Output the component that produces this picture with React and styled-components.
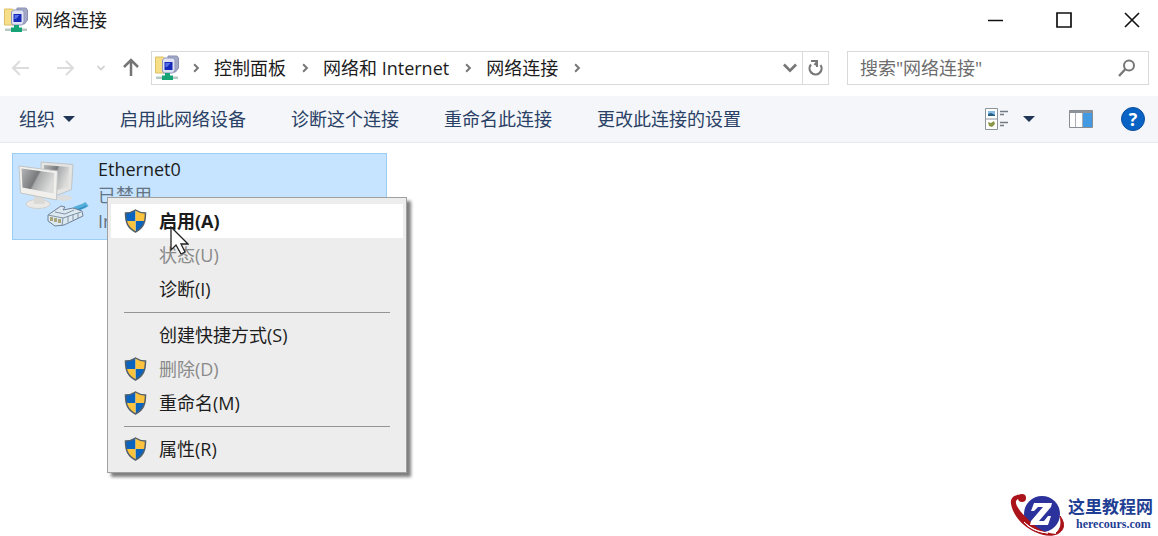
import React from "react";
import styled, { createGlobalStyle } from "styled-components";

const GlobalStyle = createGlobalStyle`
  * { box-sizing: border-box; }
  body {
    margin: 0;
    background: #fff;
    color: #1c1c1c;
    font: 18px/26px "Open Sans", "Noto Sans CJK SC", sans-serif;
  }
  button, input { font: inherit; color: inherit; }
`;

const Window = styled.div`
  position: relative;
  display: flex;
  flex-direction: column;
  min-height: 100vh;
  overflow: hidden;
`;

const IconButton = styled.button`
  display: flex;
  align-items: center;
  justify-content: center;
  flex: none;
  width: ${(p) => p.$width || 24}px;
  height: 32px;
  padding: 0;
  border: 0;
  background: none;
`;

const TitleBar = styled.header`
  display: flex;
  align-items: center;
  gap: 7px;
  height: 39px;
  padding-left: 4px;
`;

const Title = styled.h1`
  flex: 1;
  margin: 0;
  font-size: 18px;
  font-weight: 400;
`;

const WindowControls = styled.div`
  display: flex;
  gap: 16px;
`;

const NavRow = styled.div`
  display: flex;
  align-items: center;
  height: 57px;
  padding: 0 9px;
`;

const NavButtons = styled.nav`
  display: flex;
  align-items: center;
  width: 142px;
`;

const AddressBar = styled.div`
  display: flex;
  align-items: center;
  flex: 1;
  height: 34px;
  padding-left: 3px;
  border: 1px solid #d9d9d9;
`;

const Crumbs = styled.div`
  display: flex;
  align-items: center;
  flex: 1;
`;

const Crumb = styled.button`
  padding: 0 2px;
  border: 0;
  background: none;
  line-height: 24px;
  white-space: nowrap;
`;

const CrumbArrow = styled.span`
  display: flex;
  justify-content: center;
  width: 33px;
`;

const Refresh = styled(IconButton)`
  border-left: 1px solid #d9d9d9;
`;

const SearchBox = styled.label`
  display: flex;
  align-items: center;
  flex: none;
  width: 26.5%;
  height: 34px;
  margin-left: 18px;
  padding: 0 12px;
  border: 1px solid #d9d9d9;
`;

const SearchInput = styled.input`
  flex: 1;
  min-width: 0;
  padding: 0;
  border: 0;
  outline: 0;
  background: none;
  &::placeholder { color: #6d6d6d; opacity: 1; }
`;

const CommandBar = styled.div`
  display: flex;
  align-items: center;
  height: 47px;
  padding: 0 13px 0 19px;
  border-bottom: 1px solid #e6eaee;
  background: #f4f6f9;
  color: #2a4166;
`;

const Commands = styled.div`
  display: flex;
  flex: 1;
  gap: 45px;
`;

const Command = styled.button`
  display: flex;
  align-items: center;
  gap: 8px;
  padding: 0;
  border: 0;
  background: none;
  white-space: nowrap;
`;

const ViewTools = styled.div`
  display: flex;
  align-items: center;
  gap: 28px;
`;

const ViewPicker = styled.div`
  display: flex;
  gap: 8px;
`;

const HelpButton = styled.button`
  width: 24px;
  height: 24px;
  padding: 0;
  border: 1px solid #0b4f9f;
  border-radius: 50%;
  background: #0863c4;
  color: #fff;
  font-weight: 700;
  line-height: 22px;
`;

const Content = styled.main`
  flex: 1;
  padding: 10px 12px;
`;

const Connection = styled.section`
  position: relative;
  display: flex;
  gap: 7px;
  width: 375px;
  height: 87px;
  padding: 2px 4px;
  border: 1px solid #9bcdf5;
  background: #c6e4ff;
`;

const Details = styled.div`
  display: flex;
  flex-direction: column;
  line-height: 26px;
`;

const Muted = styled.span`
  color: #657483;
`;

const Menu = styled.div`
  position: absolute;
  z-index: 1;
  top: 43px;
  left: 94px;
  width: 300px;
  padding: 6px 3px;
  border: 1px solid #a0a0a0;
  background: #ededed;
  box-shadow: 4px 4px 3px rgba(0, 0, 0, 0.5);
`;

const MenuItem = styled.button`
  display: flex;
  align-items: center;
  width: 100%;
  height: 34px;
  padding: 0 0 0 13px;
  border: 0;
  background: ${(p) => (p.$active ? "#fff" : "none")};
  color: ${(p) => (p.disabled ? "#8a8a8a" : "#1c1c1c")};
  font-weight: ${(p) => (p.$active ? 700 : 400)};
  text-align: left;
`;

const MenuIcon = styled.span`
  display: flex;
  flex: none;
  width: 35px;
`;

const Separator = styled.hr`
  height: 1px;
  margin: 6px 13px 5px;
  border: 0;
  background: #949494;
`;

const Pointer = styled.svg`
  position: absolute;
  z-index: 2;
  top: 72px;
  left: 157px;
  pointer-events: none;
`;

const Watermark = styled.div`
  position: absolute;
  right: 5px;
  bottom: 0;
  display: flex;
  align-items: center;
  color: #1f3f94;
`;

const SiteName = styled.div`
  display: flex;
  flex-direction: column;
  font-size: 17px;
  font-weight: 700;
  line-height: 20px;
`;

const SiteUrl = styled.span`
  padding-left: 8px;
  font: 700 12px/14px "Liberation Serif", serif;
`;

const NetworkIcon = () => (
  <svg width="24" height="26" viewBox="0 0 24 26" aria-hidden="true">
    <path d="M.5 2h8l2 2v14H.5z" fill="#f6df86" stroke="#dcc06a" />
    <path d="M13 1h9l1.500 2v10l-3 4h-8z" fill="#a3a8c4" stroke="#8b91b4" />
    <path d="M7.500 5l2-2h9l1.500 2v10l-2 3h-9.500l-1-2z" fill="#dfe2f3" stroke="#8f95bd" />
    <path d="M9.500 7h8v8h-8z" fill="#1529b8" />
    <path d="M10.500 8h5l-3.500 4h-1.500z" fill="#5570e6" />
    <path d="M1 21.500h22v2.500H1z" fill="#b5c9c2" />
    <path d="M10 18h5v2.500h3V25H7v-4.500h3z" fill="#16a477" />
  </svg>
);

const Arrow = ({ color, turn = 0 }) => (
  <svg width="20" height="20" viewBox="0 0 20 20" fill="none" stroke={color} strokeWidth={turn === 90 ? 2.5 : 2} aria-hidden="true">
    <path transform={`rotate(${turn} 10 10)`} d="M18 10H2M9 3l-7 7 7 7" />
  </svg>
);

const Chevron = ({ down, color = "#777", size = 8 }) => (
  <svg width={size} height={size} viewBox="0 0 8 8" fill="none" stroke={color} strokeWidth="1.6" aria-hidden="true">
    <path d={down ? "M.5 2l3.5 3.5L7.500 2" : "M2.500 1L5.500 4 2.500 7"} />
  </svg>
);

const Caret = () => (
  <svg width="12" height="8" viewBox="0 0 12 8" aria-hidden="true">
    <path d="M0 1h12L6 7z" fill="#203657" />
  </svg>
);

const shieldOutline = "M11.500 1c3 2 6 3 10 3 0 9-2 15-10 19C3.500 19 1.500 13 1.500 4c4 0 7-1 10-3z";

const Shield = () => (
  <svg width="23" height="24" viewBox="0 0 23 24" aria-hidden="true">
    <defs>
      <clipPath id="shield">
        <path d={shieldOutline} />
      </clipPath>
    </defs>
    <g clipPath="url(#shield)">
      <path d="M0 0h11.500v12H0zM11.500 12H23v12H11.500z" fill="#0b63c0" />
      <path d="M11.500 0H23v12H11.500zM0 12h11.500v12H0z" fill="#fcc33e" />
    </g>
    <path d={shieldOutline} fill="none" stroke="#53606a" strokeWidth="1.500" />
  </svg>
);

const AdapterIcon = () => (
  <svg width="74" height="76" viewBox="0 0 74 76" aria-hidden="true">
    <defs>
      <linearGradient id="screen" x2="1" y2="0.400">
        <stop offset="0" stopColor="#b4b6b7" />
        <stop offset=".5" stopColor="#77797b" />
        <stop offset=".56" stopColor="#a9abac" />
        <stop offset="1" stopColor="#dcdcdb" />
      </linearGradient>
    </defs>
    <ellipse cx="47" cy="42" rx="8" ry="3" fill="#dcdddc" />
    <path d="M24 6l32 2.500-1.500 25L41 39 24 33z" fill="#e4e4e2" stroke="#c0c4c7" />
    <path d="M27 9l25 2-1 20-10 3-14-4z" fill="url(#screen)" />
    <ellipse cx="21" cy="48" rx="12" ry="4.500" fill="#eae9e6" stroke="#cfd0d0" />
    <path d="M17 38h10l1 10H17z" fill="#d9d9d6" />
    <path d="M2 10l38.500 5-1 29L3.500 37z" fill="#f1f0ed" stroke="#c3c5c6" />
    <path d="M4.500 12.500l33 4.500-1 20.500-31-6z" fill="url(#screen)" />
    <path d="M56 55c4-5 8-2 14-7" fill="none" stroke="#55add9" strokeWidth="5" />
    <path d="M57 56c5-4 8-3 12-6" fill="none" stroke="#2f8ec4" strokeWidth="1.500" />
    <path d="M31 59l13-9 4 1-2 3 10-2 9 3 1 5-19 9-9 1-7-5z" fill="#dce9f0" stroke="#6f8096" />
    <path d="M31 59l15 3 18-6M46 62l-1 8M38 56l10 2 9-4M51 60v6M56 58v6M61 57v5" fill="none" stroke="#8293a4" />
    <path d="M33 61h3v4h-3zM37 62h3v4h-3zM41 63h3v4h-3z" fill="#a9a67c" />
  </svg>
);

const menu = [
  { label: "启用(A)", shield: true, active: true },
  { label: "状态(U)", disabled: true },
  { label: "诊断(I)" },
  null,
  { label: "创建快捷方式(S)" },
  { label: "删除(D)", shield: true, disabled: true },
  { label: "重命名(M)", shield: true },
  null,
  { label: "属性(R)", shield: true },
];

export default function App() {
  return (
    <Window>
      <GlobalStyle />
      <TitleBar>
        <NetworkIcon />
        <Title>网络连接</Title>
        <WindowControls>
          <IconButton $width={52} aria-label="最小化">
            <svg width="16" height="16"><path d="M0 8.500h15" stroke="#111" strokeWidth="1.500" /></svg>
          </IconButton>
          <IconButton $width={52} aria-label="最大化">
            <svg width="16" height="16"><path d="M1 1h14v14H1z" fill="none" stroke="#111" strokeWidth="1.700" /></svg>
          </IconButton>
          <IconButton $width={52} aria-label="关闭">
            <svg width="16" height="16"><path d="M1 1l14 14M15 1L1 15" stroke="#111" strokeWidth="1.600" /></svg>
          </IconButton>
        </WindowControls>
      </TitleBar>

      <NavRow>
        <NavButtons>
          <IconButton aria-label="后退"><Arrow color="#dcdcdc" /></IconButton>
          <IconButton $width={64} aria-label="前进"><Arrow color="#dcdcdc" turn={180} /></IconButton>
          <IconButton $width={8} aria-label="最近位置"><Chevron down color="#cfcfcf" /></IconButton>
          <IconButton $width={52} aria-label="向上"><Arrow color="#757575" turn={90} /></IconButton>
        </NavButtons>
        <AddressBar>
          <NetworkIcon />
          <Crumbs>
            {["控制面板", "网络和 Internet", "网络连接"].map((name) => (
              <React.Fragment key={name}>
                <CrumbArrow><Chevron size={10} /></CrumbArrow>
                <Crumb>{name}</Crumb>
              </React.Fragment>
            ))}
            <CrumbArrow><Chevron size={10} /></CrumbArrow>
          </Crumbs>
          <IconButton aria-label="历史记录"><Chevron down size={14} /></IconButton>
          <Refresh $width={26} aria-label="刷新">
            <svg width="18" height="20" viewBox="0 0 18 20" fill="none" stroke="#777" strokeWidth="2.200">
              <path d="M5 6.500a6 6 0 1 0 9.500.500" />
              <path d="M5 3h6v6M11 4L8.500 7" strokeWidth="2" />
            </svg>
          </Refresh>
        </AddressBar>
        <SearchBox>
          <SearchInput aria-label="搜索" placeholder={'搜索"网络连接"'} />
          <svg width="18" height="18" viewBox="0 0 18 18" fill="none" stroke="#777" strokeWidth="2" aria-hidden="true">
            <circle cx="11" cy="6.500" r="5" />
            <path d="M7.500 10L1 17" strokeWidth="2.400" />
          </svg>
        </SearchBox>
      </NavRow>

      <CommandBar>
        <Commands>
          <Command>组织<Caret /></Command>
          <Command>启用此网络设备</Command>
          <Command>诊断这个连接</Command>
          <Command>重命名此连接</Command>
          <Command>更改此连接的设置</Command>
        </Commands>
        <ViewTools>
          <ViewPicker>
            <IconButton aria-label="视图">
              <svg width="24" height="24" viewBox="0 0 24 24" fill="none">
                <path d="M.5 1.500h12v21H.5zM.5 12h12" fill="#fff" stroke="#8b949b" />
                <path d="M3 4h7v5H3z" fill="#86bde4" />
                <path d="M3 9V7l3-1 4 2v1z" fill="#275f80" />
                <path d="M3 15l3 1 3-2 1 3-3 3-3-1z" fill="#889645" />
                <path d="M15 4.500h8M15 7.500h4M15 15.500h8M15 18.500h4" stroke="#757b82" strokeWidth="1.500" />
              </svg>
            </IconButton>
            <IconButton aria-label="更多视图"><Caret /></IconButton>
          </ViewPicker>
          <IconButton $width={24} aria-label="预览窗格">
            <svg width="24" height="18" viewBox="0 0 24 18">
              <path d="M.5.500h23v17H.5z" fill="#fff" stroke="#888d93" />
              <path d="M1 1h22v2H1z" fill="#8c9299" />
              <path d="M14 3h9v14h-9z" fill="#449ae2" />
              <path d="M6.500 3v14M13.500 3v14" stroke="#a9afb5" />
            </svg>
          </IconButton>
          <HelpButton aria-label="帮助">?</HelpButton>
        </ViewTools>
      </CommandBar>

      <Content>
        <Connection>
          <AdapterIcon />
          <Details>
            <span>Ethernet0</span>
            <Muted>已禁用</Muted>
            <Muted>In</Muted>
          </Details>
          <Menu role="menu">
            {menu.map((item, i) =>
              item ? (
                <MenuItem key={item.label} role="menuitem" $active={item.active} disabled={item.disabled}>
                  <MenuIcon>{item.shield && <Shield />}</MenuIcon>
                  {item.label}
                </MenuItem>
              ) : (
                <Separator key={i} />
              )
            )}
          </Menu>
          <Pointer width="19" height="30" viewBox="0 0 19 30" aria-hidden="true">
            <path d="M1 1v23l5-5 5 9 4-2-4-8h7z" fill="#fff" stroke="#222" strokeWidth="1.300" />
          </Pointer>
        </Connection>
      </Content>

      <Watermark>
        <svg width="58" height="44" viewBox="0 0 58 44" aria-hidden="true">
          <circle cx="32" cy="22" r="18" fill="#2b329b" />
          <path d="M12 3C5 2 0 5 1 12c2 11 11 22 24 28 8 4 17 5 23 2-10 0-19-4-26-11C12 22 5 14 6 9c1-2 3-3 6-3z" fill="#a91319" />
          <path d="M14 30c6 6 14 10 24 11-10-1-18-4-24-11z" fill="#fff" stroke="#fff" />
          <path d="M47 42c7-3 9-10 3-18 2 7 1 13-4 17z" fill="#a91319" stroke="#a91319" />
          <circle cx="12" cy="6" r="4" fill="#a91319" />
          <path d="M24 11h18l-1 4-12 14h5l4-5h3l-3 9H20l1-4 12-14h-5l-4 4h-3z" fill="#fff" />
        </svg>
        <SiteName>
          这里教程网
          <SiteUrl>herecours.com</SiteUrl>
        </SiteName>
      </Watermark>
    </Window>
  );
}
